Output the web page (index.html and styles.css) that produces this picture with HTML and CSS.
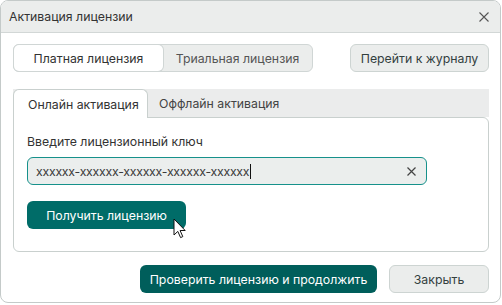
FILE: index.html
```html
<!DOCTYPE html>
<html lang="ru">
<head>
<meta charset="utf-8">
<title>Активация лицензии</title>
<link rel="stylesheet" href="styles.css">
</head>
<body>
<div class="window">
  <div class="titlebar">
    <span class="title">Активация лицензии</span>
    <svg class="close" width="10" height="10" viewBox="0 0 10 10"><path d="M0.5 0.5L9.5 9.5M9.5 0.5L0.5 9.5" stroke="#555" stroke-width="1.1" fill="none"/></svg>
  </div>
  <div class="content">
    <div class="toprow">
      <div class="segment">
        <div class="seg active">Платная лицензия</div>
        <div class="seg">Триальная лицензия</div>
      </div>
      <button class="btn ghost journal">Перейти к журналу</button>
    </div>
    <div class="tabs">
      <div class="tab active">Онлайн активация</div>
      <div class="tab">Оффлайн активация</div>
    </div>
    <div class="panel">
      <div class="label">Введите лицензионный ключ</div>
      <div class="input">
        <span class="value">xxxxxx-xxxxxx-xxxxxx-xxxxxx-xxxxxx</span><span class="caret"></span>
        <svg class="clear" width="9" height="9" viewBox="0 0 9 9"><path d="M0.5 0.5L8.5 8.5M8.5 0.5L0.5 8.5" stroke="#444" stroke-width="1.2" fill="none"/></svg>
      </div>
      <div class="getrow">
        <button class="btn primary get">Получить лицензию</button>
        <svg class="pointer" width="14" height="21" viewBox="0 0 14 21"><path d="M1 1L1 17L4.8 13.4L7.6 19.6L9.8 18.6L7.1 12.5L12.2 12.5Z" fill="#fff" stroke="#111" stroke-width="1" stroke-linejoin="round"/></svg>
      </div>
    </div>
    <div class="bottomrow">
      <button class="btn primary dark">Проверить лицензию и продолжить</button>
      <button class="btn ghost closebtn">Закрыть</button>
    </div>
  </div>
</div>
</body>
</html>
```

FILE: styles.css
```css
* { box-sizing: border-box; }
html, body { margin: 0; padding: 0; background: #fff; }
body {
  font-family: Inter, "Noto Sans", "Liberation Sans", sans-serif;
  font-size: 12.3px;
  color: #333;
  width: 502px;
  height: 305px;
  overflow: hidden;
}
.window {
  width: 501px;
  height: 303px;
  border: 1px solid #c4cac9;
  border-radius: 8px;
  overflow: hidden;
  background: #fff;
  display: flex;
  flex-direction: column;
}
.titlebar {
  height: 32px;
  flex: none;
  background: #ebedec;
  border-bottom: 1px solid #d2d7d6;
  display: flex;
  align-items: center;
  justify-content: space-between;
  padding: 0 11px 0 8px;
}
.title { color: #333; }
.close { display: block; }
.content {
  flex: 1;
  padding: 11px 11px 0 12px;
  display: flex;
  flex-direction: column;
}
.toprow {
  display: flex;
  justify-content: space-between;
  align-items: flex-start;
}
.segment {
  width: 300px;
  height: 28px;
  display: flex;
  background: #ebedec;
  border: 1px solid #d0d6d5;
  border-radius: 6px;
}
.seg {
  flex: 1;
  display: flex;
  align-items: center;
  justify-content: center;
  color: #555;
}
.seg.active {
  flex: none;
  width: 149px;
  background: #fff;
  border-radius: 5px;
  color: #333;
  box-shadow: 0 0 0 1px #d0d6d5;
}
.btn {
  font-family: inherit;
  font-size: 12.3px;
  height: 28px;
  border-radius: 6px;
  padding: 0;
  cursor: default;
}
.ghost {
  background: #ebedec;
  border: 1px solid #cdd4d2;
  color: #33403f;
}
.journal { width: 139px; }
.tabs {
  margin-top: 17px;
  height: 28px;
  background: #ebecec;
  display: flex;
}
.tab {
  display: flex;
  align-items: center;
  padding: 0 0 0 11px;
  color: #444;
}
.tab.active {
  width: 135px;
  background: #fff;
  border: 1px solid #c9d0ce;
  border-bottom: none;
  border-radius: 6px 6px 0 0;
  padding-left: 14px;
  color: #333;
  position: relative;
  z-index: 1;
  height: 29px;
}
.panel {
  height: 135px;
  border: 1px solid #c9d0ce;
  border-radius: 0 6px 6px 6px;
  padding: 16px 0 0 13px;
  display: flex;
  flex-direction: column;
}
.label { line-height: 16px; color: #333; }
.input {
  margin-top: 7px;
  width: 400px;
  height: 28px;
  border: 1px solid #16918b;
  border-radius: 6px;
  background: #ebeeed;
  display: flex;
  align-items: center;
  padding: 0 10px 0 8px;
}
.value { color: #3a3a3a; font-size: 12.3px; letter-spacing: -0.25px; }
.caret {
  width: 1px;
  height: 15px;
  background: #111;
  margin-left: 1px;
}
.clear { margin-left: auto; }
.getrow {
  margin-top: 16px;
  display: flex;
  align-items: flex-start;
  position: relative;
}
.primary {
  border: none;
  color: #fff;
  background: #006c68;
}
.get { width: 159px; height: 28px; }
.pointer {
  position: absolute;
  left: 146px;
  top: 17px;
}
.bottomrow {
  margin-top: 13px;
  display: flex;
  justify-content: flex-end;
  gap: 12px;
}
.dark { background: #005e5b; width: 237px; }
.closebtn { width: 100px; }
```
